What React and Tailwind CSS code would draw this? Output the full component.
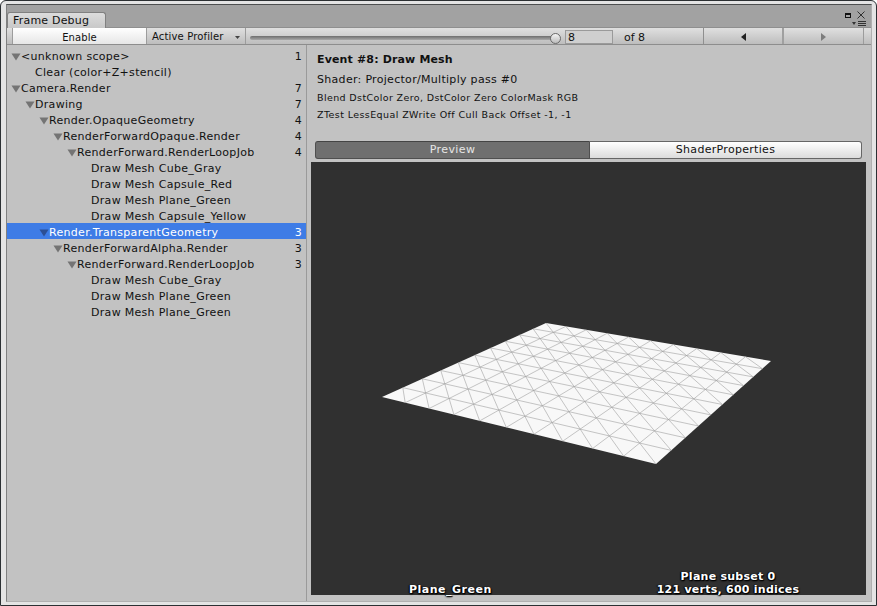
const font = { fontFamily: '"DejaVu Sans", Verdana, sans-serif' };

const rows = [
  { d: 0, t: '<unknown scope>', n: 1, arrow: true },
  { d: 1, t: 'Clear (color+Z+stencil)' },
  { d: 0, t: 'Camera.Render', n: 7, arrow: true },
  { d: 1, t: 'Drawing', n: 7, arrow: true },
  { d: 2, t: 'Render.OpaqueGeometry', n: 4, arrow: true },
  { d: 3, t: 'RenderForwardOpaque.Render', n: 4, arrow: true },
  { d: 4, t: 'RenderForward.RenderLoopJob', n: 4, arrow: true },
  { d: 5, t: 'Draw Mesh Cube_Gray' },
  { d: 5, t: 'Draw Mesh Capsule_Red' },
  { d: 5, t: 'Draw Mesh Plane_Green' },
  { d: 5, t: 'Draw Mesh Capsule_Yellow' },
  { d: 2, t: 'Render.TransparentGeometry', n: 3, arrow: true, sel: true },
  { d: 3, t: 'RenderForwardAlpha.Render', n: 3, arrow: true },
  { d: 4, t: 'RenderForward.RenderLoopJob', n: 3, arrow: true },
  { d: 5, t: 'Draw Mesh Cube_Gray' },
  { d: 5, t: 'Draw Mesh Plane_Green' },
  { d: 5, t: 'Draw Mesh Plane_Green' },
];

function Tri({ sel }) {
  return (
    <svg width="10" height="8" viewBox="0 0 10 8" className="shrink-0">
      <path d="M0.5 0.5H9.5L5 7.5Z" fill={sel ? '#2c4f94' : '#747474'} />
    </svg>
  );
}

function Row({ r }) {
  return (
    <div className={`flex items-center h-4 pr-[4px] pt-[4px] text-[11px] leading-[12px] tracking-[0.3px] ${r.sel ? 'bg-[#3e7ce6] text-white' : 'text-[#111]'}`}>
      <div style={{ width: 14 * r.d + 14 }} className="shrink-0 flex justify-end items-center">
        {r.arrow && <Tri sel={r.sel} />}
      </div>
      <span className="flex-1 whitespace-pre">{r.t}</span>
      {r.n != null && <span>{r.n}</span>}
    </div>
  );
}

function Plane() {
  // homography from unit square to the plane's quad
  const p = [[546, 323], [771, 361], [656, 464], [382, 397]];
  const [[x0, y0], [x1, y1], [x2, y2], [x3, y3]] = p;
  const dx1 = x1 - x2, dx2 = x3 - x2, dx3 = x0 - x1 + x2 - x3;
  const dy1 = y1 - y2, dy2 = y3 - y2, dy3 = y0 - y1 + y2 - y3;
  const den = dx1 * dy2 - dx2 * dy1;
  const g = (dx3 * dy2 - dx2 * dy3) / den;
  const h = (dx1 * dy3 - dx3 * dy1) / den;
  const a = x1 - x0 + g * x1, b = x3 - x0 + h * x3, c = x0;
  const d = y1 - y0 + g * y1, e = y3 - y0 + h * y3, f = y0;
  const map = (u, v) => {
    const w = g * u + h * v + 1;
    return [((a * u + b * v + c) / w - 311).toFixed(1), ((d * u + e * v + f) / w - 162).toFixed(1)];
  };
  const seg = (u0, v0, u1, v1) => {
    const A = map(u0, v0), B = map(u1, v1);
    return `M${A[0]} ${A[1]}L${B[0]} ${B[1]}`;
  };
  let path = '';
  for (let i = 1; i < 10; i++) {
    path += seg(i / 10, 0, i / 10, 1) + seg(0, i / 10, 1, i / 10);
  }
  for (let i = 0; i < 10; i++) {
    for (let j = 0; j < 10; j++) {
      path += seg(i / 10, j / 10, (i + 1) / 10, (j + 1) / 10);
    }
  }
  const quad = p.map(([x, y]) => `${x - 311},${y - 162}`).join(' ');
  return (
    <svg width="555" height="433" className="absolute left-0 top-0">
      <polygon points={quad} fill="#f8f8f8" />
      <path d={path} stroke="#a0a0a0" strokeWidth="0.6" fill="none" />
    </svg>
  );
}

const shadow = { textShadow: '1px 1px 1px #000, -1px 0 1px #000, 0 1px 2px #000' };

export default function App() {
  return (
    <div style={font} className="w-[877px] h-[606px] overflow-hidden bg-[#e4e4e4] border border-[#2c3033] rounded-t-[6px] pt-[3px] pl-[5px] pr-[4px] pb-[3px] flex flex-col">
      <div className="flex-1 flex flex-col border border-t-[#4d4f50] border-l-[#808080] border-r-[#b0b0b0] border-b-[#b0b0b0] bg-[#c2c2c2] min-h-0">
        {/* title bar */}
        <div className="h-[23px] bg-[#a2a2a2] flex justify-between items-end shrink-0 border-b border-[#8f8f8f]">
          <div className="w-[99px] h-[16px] bg-linear-to-b from-[#dcdcdc] to-[#c8c8c8] border border-b-0 border-[#808080] rounded-t-[3px] text-[11px] leading-[15px] pl-[5px] tracking-[0.2px] text-[#111] -mb-px">
            Frame Debug
          </div>
          <div className="flex flex-col items-end pr-[5px] pb-[1px] gap-[2px]">
            <div className="flex items-center gap-[6px] pr-[1px]">
              <div className="w-[6px] h-[5px] border border-t-2 border-[#111]" />
              <svg width="8" height="8" viewBox="0 0 8 8"><path d="M0.5 0.5L7.5 7.5M7.5 0.5L0.5 7.5" stroke="#222" strokeWidth="0.9" /></svg>
            </div>
            <svg width="14" height="5" viewBox="0 0 14 5"><path d="M0 1H4L2 4Z" fill="#333" /><path d="M6 .5H14M6 2.5H14M6 4.5H14" stroke="#333" strokeWidth="1" /></svg>
          </div>
        </div>
        {/* toolbar */}
        <div className="h-[17px] shrink-0 flex items-stretch bg-linear-to-b from-[#e0e0e0] to-[#bdbdbd] border-b border-[#8d8d8d] text-[10px] leading-[16px] text-[#111]">
          <div className="w-[5px]" />
          <div className="w-[134px] pt-[2px] bg-linear-to-b from-white to-[#e6e6e6] text-center tracking-[0.1px] border-l border-[#9c9c9c]">Enable</div>
          <div className="w-[100px] pt-[2px] border-x border-[#9c9c9c] pl-[5px] flex items-center justify-between pr-[5px]">
            <span className="tracking-[0.15px]">Active Profiler</span>
            <svg width="5" height="3" viewBox="0 0 5 3"><path d="M0 0H5L2.5 3Z" fill="#444" /></svg>
          </div>
          <div className="w-[319px] flex items-center pl-[4px] pr-[5px] pt-[4px] relative">
            <div className="w-[306px] h-[4px] rounded-full bg-linear-to-b from-[#6e6e6e] to-[#a8a8a8]" />
            <div className="absolute left-[304px] top-[5px] w-[11px] h-[11px] rounded-full bg-linear-to-b from-[#f4f4f4] to-[#bcbcbc] border border-[#6a6a6a]" />
          </div>
          <div className="w-[48px] mt-[2px] bg-[#cfcfcf] border border-[#9a9a9a] pl-[2px] leading-[13px] text-[11px]">8</div>
          <div className="w-[91px] pt-[2px] pl-[11px] text-[11px] border-r border-[#8f8f8f]">of 8</div>
          <div className="w-[80px] pt-[1px] flex items-center justify-center border-r-2 border-[#a0a0a0]">
            <svg width="5" height="8" viewBox="0 0 5 8"><path d="M5 0V8L0 4Z" fill="#222" /></svg>
          </div>
          <div className="w-[80px] pt-[1px] flex items-center justify-center border-r border-[#9c9c9c]">
            <svg width="5" height="8" viewBox="0 0 5 8"><path d="M0 0V8L5 4Z" fill="#7d7d7d" /></svg>
          </div>
        </div>
        {/* body */}
        <div className="flex-1 flex min-h-0">
          <div className="w-[300px] shrink-0 border-r border-[#9a9a9a] pt-[2px]">
            {rows.map((r, i) => <Row key={i} r={r} />)}
          </div>
          <div className="flex-1 flex flex-col pl-[4px] pr-[5px] min-w-0">
            <div className="pl-[6px] h-[96px] text-[#111] shrink-0">
              <div className="text-[11px] font-bold leading-4 pt-[7px] h-[25px] tracking-[0.15px]">Event #8: Draw Mesh</div>
              <div className="text-[11px] leading-4 mt-[-2px] h-[22px] pt-[4px] tracking-[0.3px]">Shader: Projector/Multiply pass #0</div>
              <div className="text-[9.5px] leading-4 h-[17px] tracking-[0.38px]">Blend DstColor Zero, DstColor Zero ColorMask RGB</div>
              <div className="text-[9.5px] leading-4 tracking-[0.41px]">ZTest LessEqual ZWrite Off Cull Back Offset -1, -1</div>
            </div>
            <div className="flex h-[18px] ml-[4px] mr-[4px] shrink-0 text-[11px] leading-[16px]">
              <div className="w-[275px] bg-[#6f6f6f] border border-[#4f4f4f] border-t-[#444] rounded-l-[3px] text-center text-[#e6e6e6] tracking-[0.4px]">Preview</div>
              <div className="flex-1 bg-linear-to-b from-white to-[#dcdcdc] border border-l-0 border-[#666] rounded-r-[3px] text-center text-[#111] tracking-[0.3px]">ShaderProperties</div>
            </div>
            <div className="relative mt-[3px] h-[433px] bg-[#303030] shrink-0">
              <Plane />
              <div style={shadow} className="absolute left-[98px] bottom-[-1px] text-[11px] leading-[13px] font-bold tracking-[0.5px] text-white">Plane_Green</div>
              <div style={shadow} className="absolute left-[342px] w-[150px] bottom-[-1px] text-center text-[11px] leading-[13px] font-bold tracking-[0.25px] text-white">
                Plane subset 0<br />121 verts, 600 indices
              </div>
            </div>
          </div>
        </div>
      </div>
    </div>
  );
}
